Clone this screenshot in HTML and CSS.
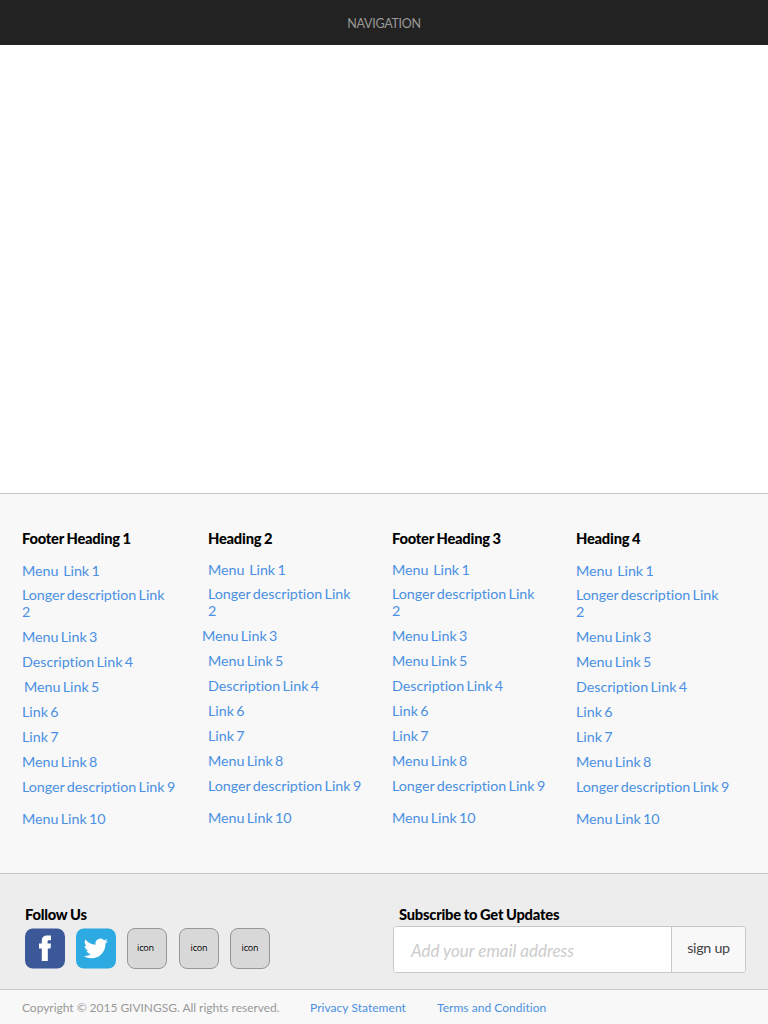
FILE: index.html
```html
<!DOCTYPE html>
<html lang="en">
<head>
<meta charset="utf-8">
<title>GivingSG</title>
<link rel="stylesheet" href="styles.css">
</head>
<body>
<header class="nav">NAVIGATION</header>
<main class="content"></main>
<footer>
  <div class="links">
    <section class="col low">
      <h2>Footer Heading 1</h2>
      <ul>
        <li class="first"><a>Menu&nbsp; Link 1</a></li>
        <li><a>Longer description Link<br>2</a></li>
        <li><a>Menu Link 3</a></li>
        <li><a>Description Link 4</a></li>
        <li class="indent"><a>Menu Link 5</a></li>
        <li><a>Link 6</a></li>
        <li><a>Link 7</a></li>
        <li><a>Menu Link 8</a></li>
        <li class="wide"><a>Longer description Link 9</a></li>
        <li><a>Menu Link 10</a></li>
      </ul>
    </section>
    <section class="col">
      <h2>Heading 2</h2>
      <ul>
        <li class="first"><a>Menu&nbsp; Link 1</a></li>
        <li><a>Longer description Link<br>2</a></li>
        <li class="outdent"><a>Menu Link 3</a></li>
        <li><a>Menu Link 5</a></li>
        <li><a>Description Link 4</a></li>
        <li><a>Link 6</a></li>
        <li><a>Link 7</a></li>
        <li><a>Menu Link 8</a></li>
        <li class="wide"><a>Longer description Link 9</a></li>
        <li><a>Menu Link 10</a></li>
      </ul>
    </section>
    <section class="col">
      <h2>Footer Heading 3</h2>
      <ul>
        <li class="first"><a>Menu&nbsp; Link 1</a></li>
        <li><a>Longer description Link<br>2</a></li>
        <li><a>Menu Link 3</a></li>
        <li><a>Menu Link 5</a></li>
        <li><a>Description Link 4</a></li>
        <li><a>Link 6</a></li>
        <li><a>Link 7</a></li>
        <li><a>Menu Link 8</a></li>
        <li class="wide"><a>Longer description Link 9</a></li>
        <li><a>Menu Link 10</a></li>
      </ul>
    </section>
    <section class="col low">
      <h2>Heading 4</h2>
      <ul>
        <li class="first"><a>Menu&nbsp; Link 1</a></li>
        <li><a>Longer description Link<br>2</a></li>
        <li><a>Menu Link 3</a></li>
        <li><a>Menu Link 5</a></li>
        <li><a>Description Link 4</a></li>
        <li><a>Link 6</a></li>
        <li><a>Link 7</a></li>
        <li><a>Menu Link 8</a></li>
        <li class="wide"><a>Longer description Link 9</a></li>
        <li><a>Menu Link 10</a></li>
      </ul>
    </section>
  </div>
  <div class="connect">
    <section class="follow">
      <h2>Follow Us</h2>
      <div class="icons">
        <svg class="social" viewBox="0 0 40 41"><rect y=".5" width="40" height="40" rx="8" fill="#3b5998"/><path fill="#fff" d="M16.800 33V20.500H14v-5h2.800v-2.600C16.800 9.300 19 7.500 22.300 7.500H26v4.800h-1.900c-1.200 0-1.500.6-1.500 1.600v1.600H26l-.5 5h-2.700V33z"/></svg>
        <svg class="social" viewBox="0 0 40 41"><rect y=".5" width="40" height="40" rx="8" fill="#2caae1"/><path fill="#fff" transform="translate(7.700 8.300) scale(1.01)" d="M23.950 4.570a10 10 0 0 1-2.820.77 4.960 4.960 0 0 0 2.160-2.720c-.95.550-2 .950-3.130 1.180a4.920 4.920 0 0 0-8.380 4.480C7.690 8.090 4.070 6.130 1.640 3.160a4.820 4.820 0 0 0-.67 2.480c0 1.710.87 3.210 2.190 4.100a4.900 4.900 0 0 1-2.230-.62v.06a4.920 4.920 0 0 0 3.950 4.830 5 5 0 0 1-2.210.08 4.940 4.940 0 0 0 4.600 3.420A9.870 9.870 0 0 1 0 19.540a14 14 0 0 0 7.550 2.210c9.050 0 14-7.500 14-13.980 0-.21 0-.42-.02-.63a9.940 9.940 0 0 0 2.460-2.550z"/></svg>
        <span class="icon shifted">icon</span>
        <span class="icon">icon</span>
        <span class="icon last">icon</span>
      </div>
    </section>
    <section class="subscribe">
      <h2>Subscribe to Get Updates</h2>
      <div class="form">
        <div class="field"><span>Add your email address</span></div>
        <div class="button">sign up</div>
      </div>
    </section>
  </div>
  <div class="legal">
    <span class="copy">Copyright © 2015 GIVINGSG. All rights reserved.</span>
    <a class="privacy">Privacy Statement</a>
    <a class="terms">Terms and Condition</a>
  </div>
</footer>
</body>
</html>
```
FILE: styles.css
```css
* { box-sizing: border-box; }
body {
  margin: 0;
  height: 1024px;
  display: flex;
  flex-direction: column;
  overflow: hidden;
  background: #fff;
  font: 14px/17px Lato, sans-serif;
  font-variant-ligatures: none;
}
.nav {
  height: 45px;
  background: #222;
  color: #999;
  font-size: 12.5px;
  letter-spacing: -0.3px;
  line-height: 47px;
  text-align: center;
}
.content { flex: 1; }
h2 {
  margin: 0;
  color: #000;
  font-size: 14.7px;
  line-height: 17px;
  font-weight: 900;
  letter-spacing: -0.22px;
  word-spacing: -0.5px;
  white-space: nowrap;
}
.links {
  height: 380px;
  padding: 36px 0 0 22px;
  border-top: 1px solid #c8c8c8;
  background: #f8f8f8;
  display: grid;
  grid-template-columns: 186px 184px 184px 1fr;
}
ul {
  list-style: none;
  margin: 14px 0 0;
  padding: 0;
  font-size: 14.3px;
  letter-spacing: -0.04px;
  word-spacing: -1.2px;
}
.low ul { margin-top: 15px; }
li { margin-bottom: 8px; white-space: nowrap; }
.first { margin-bottom: 7px; }
.wide { margin-bottom: 15px; }
.indent { margin-left: 2px; }
.outdent { margin-left: -6px; }
a { color: #4a90e2; }
.connect {
  height: 116px;
  padding: 32px 22px 0 25px;
  border-top: 1px solid #c8c8c8;
  background: #ededed;
  display: grid;
  grid-template-columns: 368px 353px;
}
.icons { display: flex; margin-top: 5px; }
.social { width: 40px; height: 41px; margin-right: 11px; }
.icon {
  width: 40px;
  height: 41px;
  margin-right: 12px;
  border: 1px solid #979797;
  border-radius: 8px;
  background: #d8d8d8;
  color: #000;
  font: 9px/37px "Open Sans", sans-serif;
  letter-spacing: -0.15px;
  text-align: center;
}
.shifted { padding-right: 3px; }
.last { margin-left: -1px; }
.subscribe h2 { padding-left: 6px; }
.form {
  display: flex;
  height: 47px;
  margin-top: 3px;
  border: 1px solid #c8c8c8;
  border-radius: 4px;
  overflow: hidden;
}
.field {
  width: 277px;
  padding-left: 17px;
  background: #fff;
  color: #ccc;
  font-size: 17px;
  font-style: italic;
  line-height: 48px;
  white-space: nowrap;
}
.button {
  flex: 1;
  border-left: 1px solid #c8c8c8;
  background: #f8f8f8;
  color: #444;
  font-size: 14.3px;
  letter-spacing: -0.3px;
  line-height: 42px;
  text-align: center;
}
.legal {
  height: 35px;
  padding-left: 22px;
  border-top: 1px solid #c8c8c8;
  background: #f8f8f8;
  display: flex;
  font-size: 12px;
  letter-spacing: 0.04px;
  line-height: 35px;
  white-space: nowrap;
}
.copy { width: 288px; color: #999; letter-spacing: -0.03px; }
.privacy { width: 127px; }
```
